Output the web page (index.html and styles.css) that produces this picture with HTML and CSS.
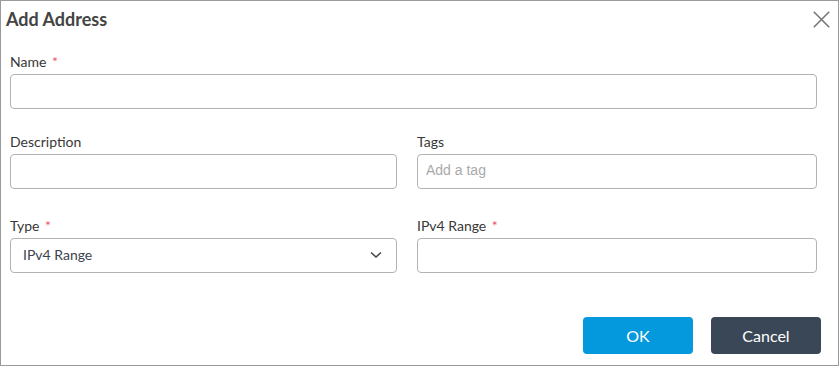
FILE: index.html
```html
<!DOCTYPE html>
<html lang="en">
<head>
    <meta charset="utf-8" />
    <link rel="stylesheet" href="styles.css">
</head>
<body>
    <div class="dialog">
        <div class="dialog-header">
            <span class="dialog-title">Add Address</span>
            <button class="close-btn" aria-label="Close">
                <svg width="17" height="17" viewBox="0 0 17 17">
                    <path d="M0.8 0.8 L16.2 16.2 M16.2 0.8 L0.8 16.2" stroke="#777" stroke-width="1.6" fill="none" />
                </svg>
            </button>
        </div>
        <form class="dialog-body">
            <div class="form-group full">
                <label>Name <span class="req">*</span></label>
                <input type="text" class="field">
            </div>
            <div class="form-row">
                <div class="form-group">
                    <label>Description</label>
                    <input type="text" class="field">
                </div>
                <div class="form-group">
                    <label>Tags</label>
                    <input type="text" class="field tag-field" placeholder="Add a tag">
                </div>
            </div>
            <div class="form-row last">
                <div class="form-group">
                    <label>Type <span class="req">*</span></label>
                    <div class="field select">
                        <span>IPv4 Range</span>
                        <svg width="12" height="8" viewBox="0 0 12 8">
                            <path d="M1 1.5 L6 6 L11 1.5" stroke="#444" stroke-width="1.5" fill="none" />
                        </svg>
                    </div>
                </div>
                <div class="form-group">
                    <label>IPv4 Range <span class="req">*</span></label>
                    <input type="text" class="field">
                </div>
            </div>
        </form>
        <div class="dialog-footer">
            <button class="btn btn-ok">OK</button>
            <button class="btn btn-cancel">Cancel</button>
        </div>
    </div>
</body>
</html>
```

FILE: styles.css
```css
:root {
    --font-family: 'Lato', sans-serif;
    --text-color: #383838;
    --border-color: #b3b3b3;
    --frame-color: #9a9a9a;
    --required: #f0506e;
    --ok-color: #0399dc;
    --cancel-color: #3a4756;
}

body {
    margin: 0;
    font-family: var(--font-family);
    color: var(--text-color);
    background: #fff;
}

.dialog {
    width: 839px;
    height: 366px;
    box-sizing: border-box;
    border: 1px solid var(--frame-color);
    display: flex;
    flex-direction: column;
}

.dialog-header {
    display: flex;
    justify-content: space-between;
    align-items: center;
    padding: 6px 8px 0 5px;
    height: 24px;
}

.dialog-title {
    font-size: 18px;
    font-weight: 700;
    color: #444;
}

.close-btn {
    border: none;
    background: none;
    padding: 0;
    width: 17px;
    height: 17px;
    cursor: pointer;
    display: flex;
}

.dialog-body {
    padding: 23px 21px 0 9px;
    margin: 0;
}

.form-row {
    display: grid;
    grid-template-columns: 387px 400px;
    column-gap: 20px;
    margin-top: 25px;
}

.form-row.last {
    margin-top: 29px;
}

.form-group {
    display: flex;
    flex-direction: column;
}

.form-group label {
    font-size: 14px;
    line-height: 16px;
    margin-bottom: 4px;
}

.req {
    color: var(--required);
    margin-left: 2px;
}

.field {
    height: 35px;
    box-sizing: border-box;
    border: 1px solid var(--border-color);
    border-radius: 4px;
    background: #fff;
    font-family: var(--font-family);
    font-size: 14px;
    padding: 0 12px;
    margin: 0;
    outline: none;
}

.tag-field {
    padding: 0 8px 4px;
}

.tag-field::placeholder {
    font-family: 'Liberation Sans', sans-serif;
    color: #a9a9a9;
    font-size: 14px;
}

.select {
    display: flex;
    align-items: center;
    justify-content: space-between;
    color: #3a4450;
    font-size: 14px;
    padding: 0 14px 2px 12px;
}

.dialog-footer {
    margin-top: auto;
    display: flex;
    justify-content: flex-end;
    gap: 18px;
    padding: 0 17px 11px 0;
}

.btn {
    width: 110px;
    height: 37px;
    border: none;
    border-radius: 4px;
    color: #fff;
    font-family: var(--font-family);
    font-size: 16px;
    cursor: pointer;
}

.btn-ok {
    background: var(--ok-color);
}

.btn-cancel {
    background: var(--cancel-color);
}
```
